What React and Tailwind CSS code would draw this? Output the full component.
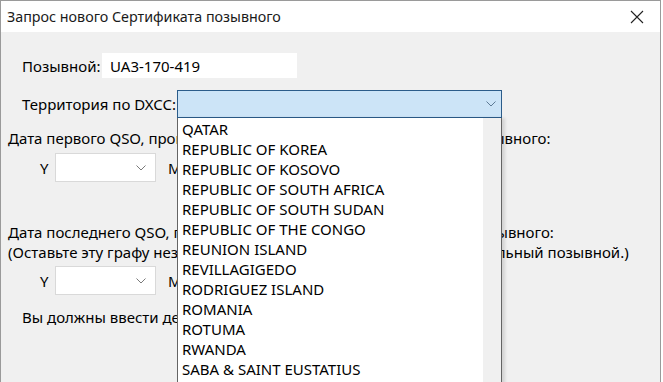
const countries = [
  'QATAR',
  'REPUBLIC OF KOREA',
  'REPUBLIC OF KOSOVO',
  'REPUBLIC OF SOUTH AFRICA',
  'REPUBLIC OF SOUTH SUDAN',
  'REPUBLIC OF THE CONGO',
  'REUNION ISLAND',
  'REVILLAGIGEDO',
  'RODRIGUEZ ISLAND',
  'ROMANIA',
  'ROTUMA',
  'RWANDA',
  'SABA & SAINT EUSTATIUS',
  'SABLE ISLAND',
];

function Chevron({ className }) {
  return (
    <svg width="10" height="6" viewBox="0 0 10 6" className={className}>
      <path d="M0.5 0.5 L5 5 L9.5 0.5" fill="none" stroke="currentColor" strokeWidth="1" />
    </svg>
  );
}

function YearSelect() {
  return (
    <div className="flex items-center pl-[39px]">
      <span className="w-[15px]">Y</span>
      <div className="w-[101px] h-[29px] bg-white border border-[#d9d9d9] flex items-center justify-end pr-[9px] text-[#7a7a7a]">
        <Chevron />
      </div>
      <span className="ml-[12px]">M</span>
    </div>
  );
}

export default function App() {
  return (
    <div className="w-[663px] h-[382px] bg-white overflow-hidden font-['Segoe_UI','Noto_Sans',sans-serif] text-[15px] leading-[20px] text-black">
      <div className="w-[661px] h-[382px] border-l border-r border-t border-[#9a9a9a] flex flex-col">
        <div className="h-[31px] shrink-0 bg-white flex items-center justify-between pl-[6px] pr-[16px]">
          <span className="text-[14.3px] text-[#1a1a1a]">Запрос нового Сертификата позывного</span>
          <svg width="14" height="14" viewBox="0 0 14 14" className="text-[#222]">
            <path d="M1 1 L13 13 M13 1 L1 13" stroke="currentColor" strokeWidth="1.1" />
          </svg>
        </div>

        <div className="relative flex-1 bg-[#f0f0f0] flex flex-col">
          <div className="flex items-center pl-[21px] mt-[21px]">
            <span className="w-[80px]">Позывной:</span>
            <div className="w-[195px] h-[25px] bg-white flex items-center pl-[8px]">UA3-170-419</div>
          </div>

          <div className="flex items-center pl-[21px] mt-[12px]">
            <span className="w-[155px]">Территория по DXCC:</span>
            <div className="w-[325px] h-[28px] bg-[#cce4f7] border border-[#2b5c8a] flex items-center justify-end pr-[5px] text-[#5d7a95]">
              <Chevron />
            </div>
          </div>

          <div className="pl-[7px] mt-[10px] whitespace-nowrap">
            Дата первого QSO, проведенного при использовании данного позывного:
          </div>

          <div className="mt-[5px]">
            <YearSelect />
          </div>

          <div className="pl-[7px] mt-[40px] whitespace-nowrap">
            <div>Дата последнего QSO, проведенного при использовании этого позывного:</div>
            <div>(Оставьте эту графу незаполненной, если это ваш текущий официальный позывной.)</div>
          </div>

          <div className="mt-[4px]">
            <YearSelect />
          </div>

          <div className="pl-[21px] mt-[12px] whitespace-nowrap">
            Вы должны ввести действительную дату первого QSO.
          </div>

          <div className="absolute left-[176px] top-[86px] w-[325px] h-[300px] bg-white border-l border-r border-[#646464] flex shadow-[3px_0_3px_rgba(0,0,0,0.12)]">
            <div className="flex-1 pt-[1px] pl-[4px]">
              {countries.map((c) => (
                <div key={c} className="h-[20px] whitespace-nowrap">{c}</div>
              ))}
            </div>
            <div className="w-[18px] bg-[#f0f0f0]" />
          </div>
        </div>
      </div>
    </div>
  );
}
